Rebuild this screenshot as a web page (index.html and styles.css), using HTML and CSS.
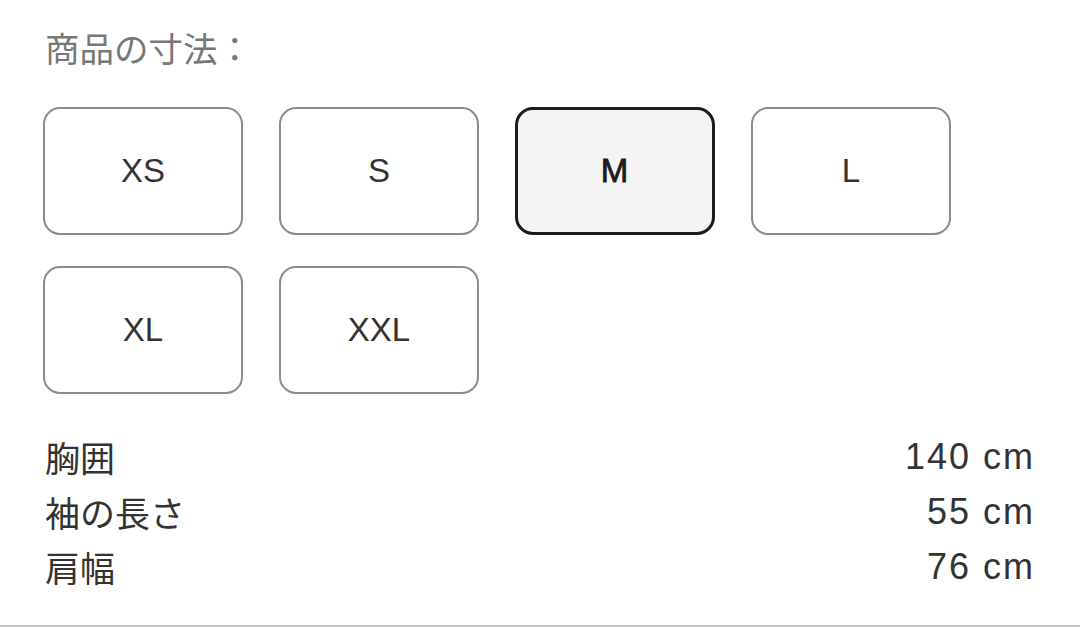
FILE: index.html
```html
<!DOCTYPE html>
<html lang="ja">
<head>
<meta charset="utf-8">
<title>商品の寸法</title>
<link rel="stylesheet" href="styles.css">
</head>
<body>
<div class="page">
  <div class="title">商品の寸法：</div>
  <div class="sizes">
    <div class="size">XS</div>
    <div class="size">S</div>
    <div class="size selected">M</div>
    <div class="size">L</div>
    <div class="size">XL</div>
    <div class="size">XXL</div>
  </div>
  <div class="dims">
    <div class="row"><span class="label">胸囲</span><span class="value">140 cm</span></div>
    <div class="row"><span class="label">袖の長さ</span><span class="value">55 cm</span></div>
    <div class="row"><span class="label">肩幅</span><span class="value">76 cm</span></div>
  </div>
</div>
</body>
</html>
```

FILE: styles.css
```css
html, body {
  margin: 0;
  padding: 0;
  background: #ffffff;
}
body {
  font-family: "Liberation Sans", "Noto Sans CJK JP", sans-serif;
}
.page {
  box-sizing: border-box;
  height: 627px;
  padding: 20px 47px 0 44px;
  border-bottom: 2px solid #c4c4c4;
  display: flex;
  flex-direction: column;
}
.title {
  font-family: "Noto Sans CJK JP", sans-serif;
  font-size: 34.5px;
  line-height: 54px;
  color: #787878;
  margin-left: 1px;
}
.sizes {
  margin-top: 33px;
  margin-left: -1px;
  display: grid;
  grid-template-columns: repeat(4, 200px);
  grid-auto-rows: 128px;
  column-gap: 36px;
  row-gap: 31px;
}
.size {
  box-sizing: border-box;
  border: 2px solid #8c8c8c;
  border-radius: 17px;
  background: #ffffff;
  display: flex;
  align-items: center;
  justify-content: center;
  font-size: 33px;
  color: #333333;
}
.size.selected {
  border: 3px solid #1c1c1c;
  border-radius: 18px;
  background: #f4f4f4;
  color: #1c1c1c;
  -webkit-text-stroke: 0.8px #1c1c1c;
  letter-spacing: 1px;
}
.dims {
  margin-top: 35px;
  display: flex;
  flex-direction: column;
}
.row {
  display: flex;
  justify-content: space-between;
  align-items: center;
  height: 55px;
  color: #333333;
}
.label {
  font-family: "Noto Sans CJK JP", sans-serif;
  font-size: 35px;
  margin-left: 1px;
}
.value {
  font-family: "Liberation Sans", sans-serif;
  font-size: 36px;
  letter-spacing: 2px;
  margin-right: -2px;
}
```
